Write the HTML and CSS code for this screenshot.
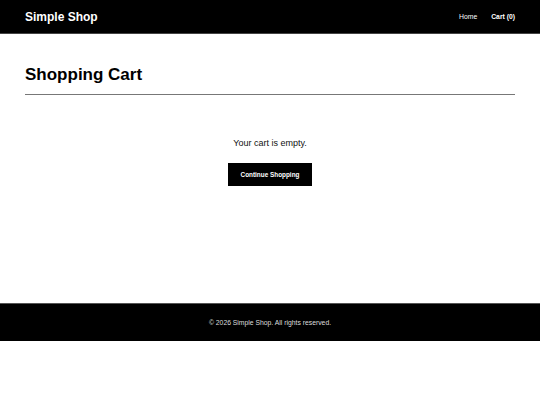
FILE: index.html
```html
<!DOCTYPE html>
<html lang="en">
<head>
    <meta charset="UTF-8">
    <meta name="viewport" content="width=device-width, initial-scale=1.0">
    <title>Shopping Cart - Simple Shop</title>
    <link rel="stylesheet" href="styles.css">
</head>
<body>

    <header class="site-header">
        <a class="logo" href="#">Simple Shop</a>
        <nav class="nav">
            <a href="#">Home</a>
            <a href="#" class="cart-link">Cart (0)</a>
        </nav>
    </header>

    <main class="content">
        <h1 class="page-title">Shopping Cart</h1>

        <!-- Carrinho vazio -->
        <div class="cart-empty">
            <p>Your cart is empty.</p>
            <a href="#" class="btn">Continue Shopping</a>
        </div>
    </main>

    <footer class="site-footer">
        <p>&copy; 2026 Simple Shop. All rights reserved.</p>
    </footer>

</body>
</html>
```

FILE: styles.css
```css
body, html {
    margin: 0;
    padding: 0;
    background-color: #ffffff;
    font-family: "Liberation Sans", Arial, sans-serif;
    color: #000;
}

a {
    text-decoration: none;
    color: inherit;
}

/* Cabeçalho */
.site-header {
    height: 33px;
    padding: 0 25px;
    background-color: #000;
    border-bottom: 1px solid #444;
    display: flex;
    justify-content: space-between;
    align-items: center;
}

.logo {
    color: #fff;
    font-size: 12px;
    font-weight: bold;
}

.nav {
    display: flex;
    gap: 14px;
    font-size: 6.8px;
}

.nav a {
    color: #fff;
}

.nav .cart-link {
    font-weight: bold;
}

/* Conteúdo */
.content {
    min-height: 269px;
    padding: 0 25px;
    box-sizing: border-box;
}

.page-title {
    margin: 0;
    padding: 31px 0 9px;
    font-size: 17px;
    line-height: 20px;
    border-bottom: 1px solid #777;
}

.cart-empty {
    padding-top: 42px;
    display: flex;
    flex-direction: column;
    align-items: center;
}

.cart-empty p {
    margin: 0 0 14px;
    font-size: 9px;
    line-height: 12px;
    color: #111;
}

.btn {
    display: block;
    width: 84px;
    height: 23px;
    line-height: 23px;
    text-align: center;
    background-color: #000;
    color: #fff;
    font-size: 6.4px;
    font-weight: bold;
}

/* Rodapé */
.site-footer {
    height: 37px;
    background-color: #000;
    border-top: 1px solid #555;
    display: flex;
    justify-content: center;
    align-items: center;
}

.site-footer p {
    margin: 0;
    color: #ddd;
    font-size: 6.8px;
}
```
